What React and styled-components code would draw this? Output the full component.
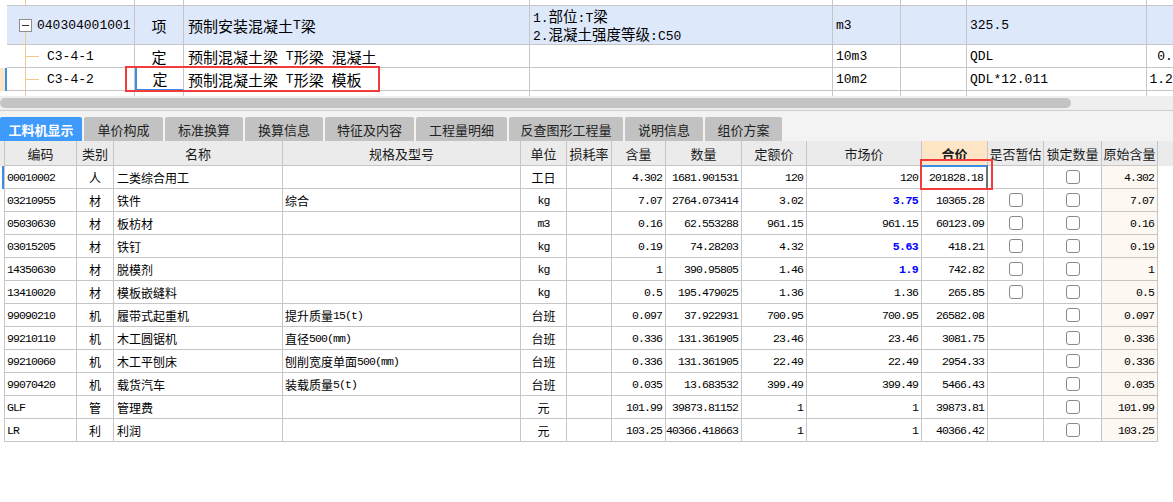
import React from 'react'
import styled, { createGlobalStyle, css } from 'styled-components'

const GlobalStyle = createGlobalStyle`
  html, body { margin: 0; padding: 0; background: #fff; }
  body {
    font-family: "Noto Sans CJK SC", "Liberation Sans", sans-serif;
    color: #000;
  }
`

const LATIN = /([\u0000-\u02ff]+)/
const isLatin = s => /^[\u0000-\u02ff]+$/.test(s)

// latin runs get the narrow mono face, CJK stays in Noto
const Mixed = ({ text, $big }) =>
    String(text).split(LATIN).filter(Boolean).map((s, i) =>
        isLatin(s)
            ? <Lat key={i} $big={$big}>{s}</Lat>
            : <React.Fragment key={i}>{s}</React.Fragment>
    )

const TOP_COLS = '7px 128px 49px 346px 303px 68px 66px 180px 62px'
const BOT_COLS = '5px 72px 37px 169px 238px 46px 45px 54px 76px 65px 115px 66px 56px 58px 56px'
const LINE = '#c6c6c6'
const BLUE_SEL = '#3b8ee8'

const topRows = [
    { code: '040304001001', type: '项', name: '预制安装混凝土T梁', feat: ['1.部位:T梁', '2.混凝土强度等级:C50'], unit: 'm3', expr: '325.5', qty: '' },
    { code: 'C3-4-1', type: '定', name: '预制混凝土梁 T形梁 混凝土', unit: '10m3', expr: 'QDL', qty: '0.1000' },
    { code: 'C3-4-2', type: '定', name: '预制混凝土梁 T形梁 模板', unit: '10m2', expr: 'QDL*12.011', qty: '1.20110' },
]

const tabs = [
    ['工料机显示', 82], ['单价构成', 79], ['标准换算', 78], ['换算信息', 78], ['特征及内容', 89],
    ['工程量明细', 91], ['反查图形工程量', 114], ['说明信息', 78], ['组价方案', 77],
]

const heads = ['', '编码', '类别', '名称', '规格及型号', '单位', '损耗率', '含量', '数量', '定额价', '市场价', '合价', '是否暂估', '锁定数量', '原始含量']

const rows = [
    ['00010002', '人', '二类综合用工', '', '工日', '4.302', '1681.901531', '120', '120', '201828.18', false, '4.302'],
    ['03210955', '材', '铁件', '综合', 'kg', '7.07', '2764.073414', '3.02', '3.75', '10365.28', true, '7.07', true],
    ['05030630', '材', '板枋材', '', 'm3', '0.16', '62.553288', '961.15', '961.15', '60123.09', true, '0.16'],
    ['03015205', '材', '铁钉', '', 'kg', '0.19', '74.28203', '4.32', '5.63', '418.21', true, '0.19', true],
    ['14350630', '材', '脱模剂', '', 'kg', '1', '390.95805', '1.46', '1.9', '742.82', true, '1', true],
    ['13410020', '材', '模板嵌缝料', '', 'kg', '0.5', '195.479025', '1.36', '1.36', '265.85', true, '0.5'],
    ['99090210', '机', '履带式起重机', '提升质量15(t)', '台班', '0.097', '37.922931', '700.95', '700.95', '26582.08', false, '0.097'],
    ['99210110', '机', '木工圆锯机', '直径500(mm)', '台班', '0.336', '131.361905', '23.46', '23.46', '3081.75', false, '0.336'],
    ['99210060', '机', '木工平刨床', '刨削宽度单面500(mm)', '台班', '0.336', '131.361905', '22.49', '22.49', '2954.33', false, '0.336'],
    ['99070420', '机', '载货汽车', '装载质量5(t)', '台班', '0.035', '13.683532', '399.49', '399.49', '5466.43', false, '0.035'],
    ['GLF', '管', '管理费', '', '元', '101.99', '39873.81152', '1', '1', '39873.81', false, '101.99'],
    ['LR', '利', '利润', '', '元', '103.25', '40366.418663', '1', '1', '40366.42', false, '103.25'],
]

const App = () => {
    return (
        <Page>
            <GlobalStyle />

            <TopGrid>
                <TopRow $h={6} $border>
                    <Indicator />
                    <TreeCell $line="full" />
                    {Array.from({ length: 7 }).map((_, i) => <TopCell key={i} />)}
                </TopRow>

                {topRows.map((r, i) => (
                    <TopRow key={r.code} $h={i === 0 ? 39 : 23} $bg={i === 0 ? '#dde8fa' : '#fff'} $border>
                        <Indicator $active={i === 2} />
                        <TreeCell $line={i === 0 ? 'box' : 'full'} $branch={i > 0} $pad={i === 0 ? 12 : 40}>
                            {i === 0 && <Fold />}
                            <Mixed text={r.code} $big />
                        </TreeCell>
                        <TopCell $align="center" $sel={i === 2}>{r.type}</TopCell>
                        <TopCell $pad={4}><Mixed text={r.name} $big /></TopCell>
                        <TopCell $col>
                            {r.feat && r.feat.map(f => <FeatLine key={f}><Mixed text={f} $big /></FeatLine>)}
                        </TopCell>
                        <TopCell><Mixed text={r.unit} $big /></TopCell>
                        <TopCell />
                        <TopCell><Mixed text={r.expr} $big /></TopCell>
                        <TopCell $align="right"><Mixed text={r.qty} $big /></TopCell>
                    </TopRow>
                ))}

                <TopRow $h={5}>
                    <Indicator />
                    <TreeCell $line="full" />
                    {Array.from({ length: 7 }).map((_, i) => <TopCell key={i} />)}
                </TopRow>
            </TopGrid>

            <ScrollTrack>
                <ScrollThumb />
            </ScrollTrack>

            <TabBar>
                {tabs.map(([t, w], i) => (
                    <Tab key={t} $w={w} $active={i === 0}>{t}</Tab>
                ))}
            </TabBar>

            <Header>
                {heads.map((h, i) => (
                    <HeadCell key={i} $hl={h === '合价'} $first={i === 0}>{h}</HeadCell>
                ))}
            </Header>

            {rows.map((r, i) => {
                const [code, cat, name, spec, unit, amt, qty, quota, market, total, est, orig, blue] = r
                return (
                    <BodyRow key={code}>
                        <RowMark $active={i === 0} />
                        <Cell $pad={2}><Mixed text={code} /></Cell>
                        <Cell $align="center">{cat}</Cell>
                        <Cell $pad={3}>{name}</Cell>
                        <Cell $pad={2}><Mixed text={spec} /></Cell>
                        <Cell $align="center"><Mixed text={unit} /></Cell>
                        <Cell />
                        <Cell $align="right"><Mixed text={amt} /></Cell>
                        <Cell $align="right"><Mixed text={qty} /></Cell>
                        <Cell $align="right"><Mixed text={quota} /></Cell>
                        <Cell $align="right">
                            {blue ? <BlueNum>{market}</BlueNum> : <Mixed text={market} />}
                        </Cell>
                        <Cell $align="right" $sel={i === 0}><Mixed text={total} /></Cell>
                        <Cell $align="center">{est && <Check />}</Cell>
                        <Cell $align="center"><Check /></Cell>
                        <Cell $align="right" $bg="#fdf8f2"><Mixed text={orig} /></Cell>
                    </BodyRow>
                )
            })}

            <Mark $x={125} $y={66} $w={255} $h={26} />
            <Mark $x={920} $y={159} $w={73} $h={31} />
        </Page>
    )
}

export default App


const Page = styled.div`
    position: relative;
    width: 1173px;
    height: 502px;
    overflow: hidden;
    background: #fff;
`

const Lat = styled.span`
    font-family: "Liberation Mono", "DejaVu Sans Mono", monospace;
    white-space: pre;
    ${p => p.$big
        ? css`font-size: 13px;`
        : css`font-size: 11.5px; letter-spacing: -0.9px;`}
`

const TopGrid = styled.div`
    width: 1209px;
`

const TopRow = styled.div`
    display: grid;
    grid-template-columns: ${TOP_COLS};
    height: ${p => p.$h}px;
    background: ${p => p.$bg || '#fff'};

    & > div:not(:first-child) {
        border-bottom: ${p => (p.$border ? `1px solid ${LINE}` : 'none')};
    }
`

const Indicator = styled.div`
    background: ${p => (p.$active ? '#fde6c8' : '#fff')};
    border-right: 2px solid ${p => (p.$active ? BLUE_SEL : '#fff')};
    box-sizing: border-box;
`

const TopCell = styled.div`
    box-sizing: border-box;
    display: flex;
    flex-direction: ${p => (p.$col ? 'column' : 'row')};
    align-items: ${p => (p.$col ? 'flex-start' : 'center')};
    justify-content: ${p => (p.$col ? 'center' : p.$align === 'center' ? 'center' : p.$align === 'right' ? 'flex-end' : 'flex-start')};
    padding: 0 ${p => (p.$align === 'right' ? 4 : 0)}px 0 ${p => (p.$align ? 0 : p.$pad || 3)}px;
    border-right: 1px solid ${LINE};
    font-size: 15px;
    white-space: nowrap;
    overflow: ${p => (p.$col ? 'visible' : 'hidden')};
    min-height: 0;

    ${p => p.$sel && css`
        border-left: 2px solid ${BLUE_SEL};
        border-bottom: 2px solid ${BLUE_SEL} !important;
    `}
`

const FeatLine = styled.div`
    display: block;
    height: 18px;
    line-height: 18px;
    font-size: 14.5px;
    flex-shrink: 0;
`

const TreeCell = styled.div`
    position: relative;
    box-sizing: border-box;
    display: flex;
    align-items: center;
    padding-left: ${p => p.$pad || 0}px;
    border-right: 1px solid ${LINE};
    font-size: 15px;
    white-space: nowrap;

    &::before {
        content: '';
        position: absolute;
        left: 18px;
        width: 1px;
        background: #f6c68e;
        top: ${p => (p.$line === 'box' ? '26px' : '0')};
        bottom: 0;
    }

    ${p => p.$branch && css`
        &::after {
            content: '';
            position: absolute;
            left: 18px;
            top: 50%;
            width: 14px;
            height: 1px;
            background: #f6c68e;
        }
    `}
`

const Fold = styled.span`
    position: relative;
    width: 13px;
    height: 13px;
    margin-right: 5px;
    box-sizing: border-box;
    border: 1px solid #8f8f8f;
    background: #fff;
    z-index: 1;

    &::after {
        content: '';
        position: absolute;
        left: 2px;
        right: 2px;
        top: 5px;
        height: 1px;
        background: #333;
    }
`

const ScrollTrack = styled.div`
    height: 15px;
    box-sizing: border-box;
    padding-top: 2px;
    background: #efefef;
    border-bottom: 1px solid #cfcfcf;
`

const ScrollThumb = styled.div`
    width: 1071px;
    height: 10px;
    border-radius: 5px;
    background: #c4c4c4;
`

const TabBar = styled.div`
    display: flex;
    align-items: flex-end;
    gap: 2px;
    height: 30px;
    background: #f3f3f3;
`

const Tab = styled.div`
    width: ${p => p.$w}px;
    height: 24px;
    display: flex;
    align-items: center;
    justify-content: center;
    border-radius: 2px 2px 0 0;
    font-size: 13px;
    background: ${p => (p.$active ? '#3f9bfb' : '#c2c2c2')};
    color: ${p => (p.$active ? '#fff' : '#222')};
    font-weight: ${p => (p.$active ? 700 : 400)};
`

const Header = styled.div`
    display: grid;
    grid-template-columns: ${BOT_COLS};
    height: 25px;
    background: #ebebeb;
`

const HeadCell = styled.div`
    box-sizing: border-box;
    display: flex;
    align-items: center;
    justify-content: center;
    border-right: 1px solid ${LINE};
    border-bottom: ${p => (p.$first ? 'none' : `1px solid ${LINE}`)};
    font-size: 13px;
    color: #1a1a1a;
    white-space: nowrap;
    background: ${p => (p.$hl ? '#fde5c6' : 'transparent')};
    font-weight: ${p => (p.$hl ? 700 : 400)};
`

const BodyRow = styled.div`
    display: grid;
    grid-template-columns: ${BOT_COLS};
    height: 23px;
`

const RowMark = styled.div`
    box-sizing: border-box;
    border-right: 1px solid ${LINE};
    ${p => p.$active && css`
        box-shadow: inset -2px 0 0 ${BLUE_SEL};
    `}
`

const Cell = styled.div`
    box-sizing: border-box;
    display: flex;
    align-items: center;
    justify-content: ${p => (p.$align === 'center' ? 'center' : p.$align === 'right' ? 'flex-end' : 'flex-start')};
    padding: 0 ${p => (p.$align === 'right' ? 3 : 0)}px 0 ${p => p.$pad || 0}px;
    border-right: 1px solid ${LINE};
    border-bottom: 1px solid ${LINE};
    background: ${p => p.$bg || '#fff'};
    font-size: 12px;
    white-space: nowrap;
    overflow: hidden;

    ${p => p.$sel && css`
        border-top: 2px solid ${BLUE_SEL};
        border-right: 2px solid #707070;
        margin-top: -1px;
    `}
`

const BlueNum = styled.span`
    font-family: "Liberation Mono", "DejaVu Sans Mono", monospace;
    font-size: 11.5px;
    letter-spacing: -0.6px;
    font-weight: 700;
    color: #0000ff;
`

const Check = styled.span`
    width: 14px;
    height: 14px;
    box-sizing: border-box;
    border: 1px solid #8a8a8a;
    border-radius: 3px;
    background: #fff;
`

const Mark = styled.div`
    position: absolute;
    left: ${p => p.$x}px;
    top: ${p => p.$y}px;
    width: ${p => p.$w}px;
    height: ${p => p.$h}px;
    box-sizing: border-box;
    border: 2px solid #f23b3b;
    pointer-events: none;
`
